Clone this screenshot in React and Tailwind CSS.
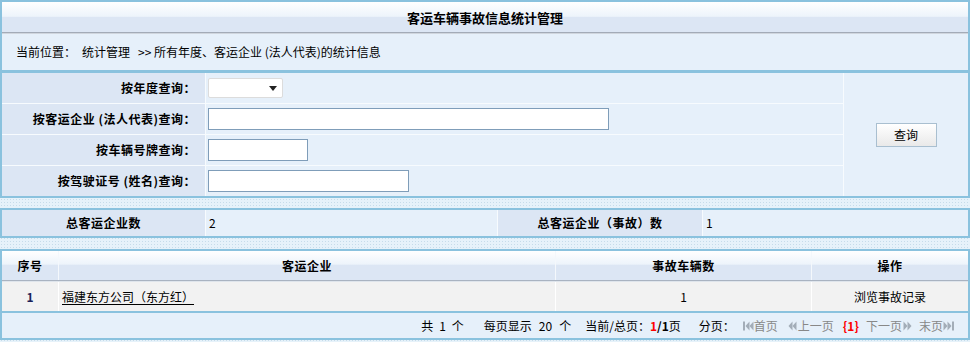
import React from 'react';

// pager arrows, drawn as little svgs
function PagerIcon({ dir, bar }) {
  const left = dir === 'left';
  return (
    <svg width="11" height="10" viewBox="0 0 11 10" className="inline-block">
      {left ? (
        <g fill="#a3adb8">
          {bar && <rect x="0" y="0.5" width="2" height="9" />}
          <polygon points={bar ? '6.5,0.5 2.5,5 6.5,9.5' : '5.5,0.5 1.5,5 5.5,9.5'} />
          <polygon points={bar ? '10.5,0.5 6.5,5 10.5,9.5' : '9.5,0.5 5.5,5 9.5,9.5'} />
        </g>
      ) : (
        <g fill="#a3adb8">
          <polygon points={bar ? '0.5,0.5 4.5,5 0.5,9.5' : '1.5,0.5 5.5,5 1.5,9.5'} />
          <polygon points={bar ? '4.5,0.5 8.5,5 4.5,9.5' : '5.5,0.5 9.5,5 5.5,9.5'} />
          {bar && <rect x="9" y="0.5" width="2" height="9" />}
        </g>
      )}
    </svg>
  );
}

function QueryLabel({ children }) {
  return (
    <div className="bg-[#dce6f4] flex items-center justify-end pr-[9px] font-bold tracking-[0.5px]">
      {children}
    </div>
  );
}

function App() {
  return (
    <div className="w-[970px] h-[342px] overflow-hidden text-[12px] leading-none text-black font-['Noto_Sans_CJK_SC',sans-serif] bg-[#e6f2fa] bg-[radial-gradient(circle,#c6dcea_0.7px,transparent_0.9px)] bg-[length:3px_3px]">

      {/* title + breadcrumb */}
      <div className="border-2 border-[#8ac2de] bg-[#e6f0fa]">
        <div className="h-[30px] flex items-center justify-center font-bold text-[13px] bg-[linear-gradient(to_bottom,#ffffff_0%,#edf4fb_48%,#dce6f4_50%,#dce6f4_100%)]">
          客运车辆事故信息统计管理
        </div>
        <div className="h-[2px] bg-[#a3abb7] border-b border-[#d0d6de]"></div>
        <div className="h-[36px] flex items-center pl-[14px]">
          <span>当前位置：</span>
          <span className="ml-[6px]">统计管理</span>
          <span className="ml-[8px]">&gt;&gt; 所有年度、客运企业 (法人代表)的统计信息</span>
        </div>
      </div>

      {/* query form */}
      <div className="border-x-2 border-b-2 border-t border-[#8ac2de] bg-[#f7fbfe]">
        <div className="grid grid-cols-[203px_637px_1fr] grid-rows-[repeat(4,30px)] gap-px">
          <QueryLabel>按年度查询：</QueryLabel>
          <div className="bg-[#e6f0fa] flex items-center pl-[2px]">
            <div className="relative w-[75px] h-[20px]">
              <select className="appearance-none w-full h-full bg-white border border-[#dcdcdc] rounded-[2px] outline-none"></select>
              <svg width="8" height="5" viewBox="0 0 8 5" className="absolute right-[6px] top-[8px] pointer-events-none">
                <polygon points="0,0 8,0 4,5" fill="#222" />
              </svg>
            </div>
          </div>
          <div className="row-span-4 bg-[#e6f0fa] flex items-center justify-center">
            <button className="w-[61px] h-[24px] border border-[#a9bfd0] bg-[linear-gradient(to_bottom,#ffffff,#e9e9e9)] text-[12px] text-black">
              查询
            </button>
          </div>

          <QueryLabel>按客运企业 (法人代表)查询：</QueryLabel>
          <div className="bg-[#e6f0fa] flex items-center pl-[2px]">
            <input className="w-[401px] h-[22px] bg-white border border-[#7f9db9] outline-none" />
          </div>

          <QueryLabel>按车辆号牌查询：</QueryLabel>
          <div className="bg-[#e6f0fa] flex items-center pl-[2px]">
            <input className="w-[100px] h-[22px] bg-white border border-[#7f9db9] outline-none" />
          </div>

          <QueryLabel>按驾驶证号 (姓名)查询：</QueryLabel>
          <div className="bg-[#e6f0fa] flex items-center pl-[2px]">
            <input className="w-[201px] h-[22px] bg-white border border-[#7f9db9] outline-none" />
          </div>
        </div>
      </div>

      {/* totals */}
      <div className="mt-[10px] border-2 border-[#8ac2de] bg-[#f7fbfe]">
        <div className="grid grid-cols-[203px_291px_204px_1fr] h-[26px] gap-px">
          <div className="bg-[#dce6f4] flex items-center justify-center font-bold tracking-[0.5px]">总客运企业数</div>
          <div className="bg-[#e6f0fa] flex items-center pl-[3px]">2</div>
          <div className="bg-[#dce6f4] flex items-center justify-center font-bold tracking-[0.5px]">总客运企业（事故）数</div>
          <div className="bg-[#e6f0fa] flex items-center pl-[3px]">1</div>
        </div>
      </div>

      {/* list */}
      <div className="mt-[11px] border-2 border-[#8ac2de] bg-white">
        <div className="grid grid-cols-[56px_496px_255px_1fr] h-[29px] gap-px bg-[#f4f8fc] font-bold tracking-[0.5px]">
          {['序号', '客运企业', '事故车辆数', '操作'].map((h) => (
            <div key={h} className="flex items-center justify-center bg-[linear-gradient(to_bottom,#ffffff_0%,#edf4fb_45%,#dce6f4_50%,#dce6f4_100%)]">
              {h}
            </div>
          ))}
        </div>
        <div className="h-[2px] bg-[#a9b3c1] border-b border-[#dfe5ec]"></div>
        <div className="grid grid-cols-[56px_496px_255px_1fr] h-[29px] gap-px bg-white">
          <div className="bg-[#f2f2f2] flex items-center justify-center font-bold text-[#1b1f5a]">1</div>
          <div className="bg-[#f2f2f2] flex items-center pl-[3px]">
            <a href="#" className="underline underline-offset-2 text-black">福建东方公司（东方红）</a>
          </div>
          <div className="bg-[#f2f2f2] flex items-center justify-center">1</div>
          <div className="bg-[#f2f2f2] flex items-center justify-center">浏览事故记录</div>
        </div>
        <div className="border-t-2 border-[#8ac2de] h-[27px] bg-[#e6f0fa] flex items-center justify-end pr-[14px]">
          <span>共</span>
          <span className="ml-[6px]">1</span>
          <span className="ml-[6px]">个</span>
          <span className="ml-[20px]">每页显示</span>
          <span className="ml-[7px]">20</span>
          <span className="ml-[7px]">个</span>
          <span className="ml-[14px]">当前/总页：</span>
          <span className="font-bold text-[#ff0000]">1</span>
          <span className="font-bold">/1</span>
          <span>页</span>
          <span className="ml-[18px]">分页：</span>
          <span className="ml-[8px] text-[#888888] flex items-center">
            <PagerIcon dir="left" bar />
            <span>首页</span>
            <span className="ml-[9px] flex items-center"><PagerIcon dir="left" /></span>
            <span>上一页</span>
            <span className="ml-[9px] font-bold text-[#ff0000]">{'{1}'}</span>
            <span className="ml-[7px]">下一页</span>
            <PagerIcon dir="right" />
            <span className="ml-[6px]">末页</span>
            <PagerIcon dir="right" bar />
          </span>
        </div>
      </div>
    </div>
  );
}

export default App;
